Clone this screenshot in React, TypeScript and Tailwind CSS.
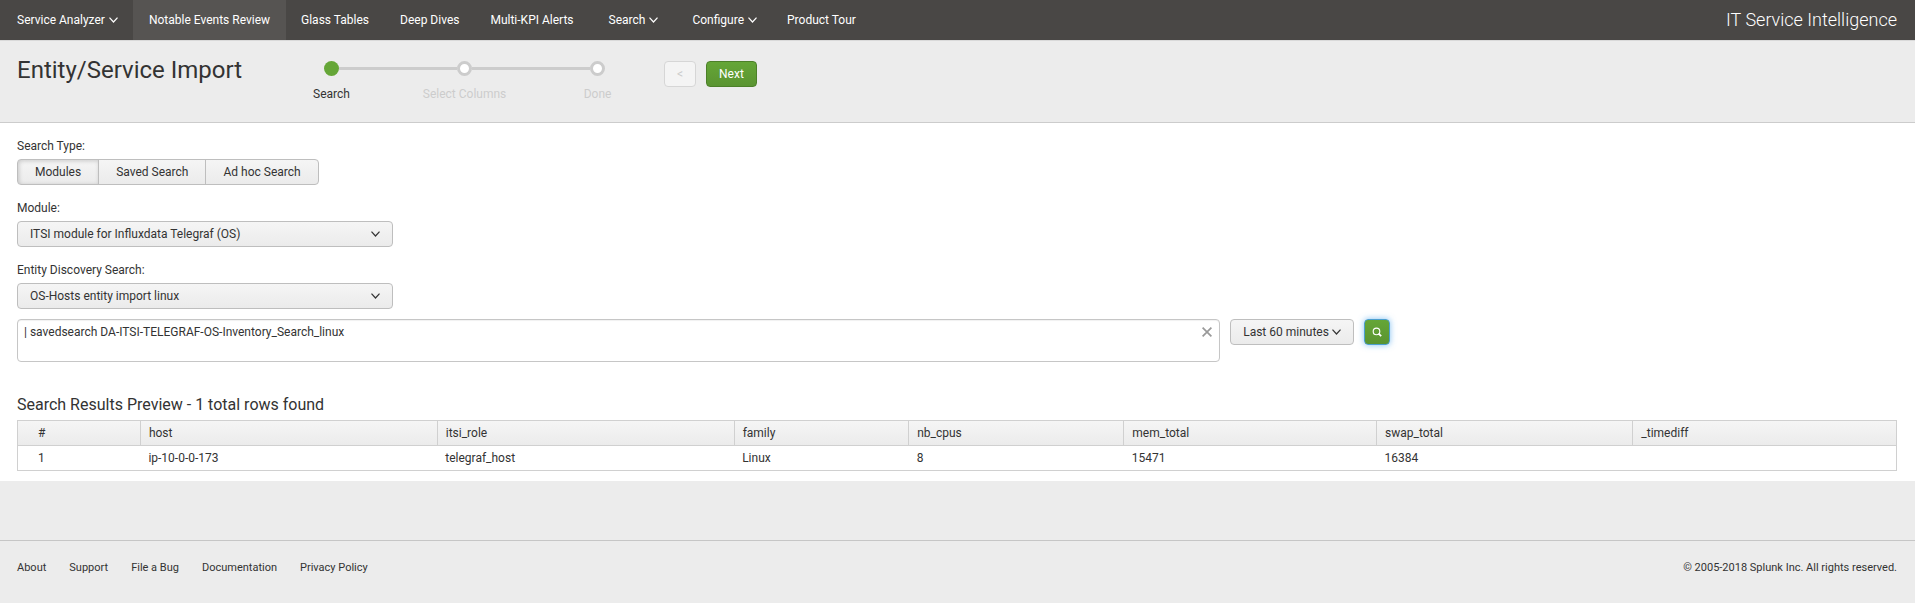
import { useState } from "react";
import type { ReactNode } from "react";

type NavItem = { label: string; menu?: boolean; active?: boolean };

const navItems: NavItem[] = [
  { label: "Service Analyzer", menu: true },
  { label: "Notable Events Review", active: true },
  { label: "Glass Tables" },
  { label: "Deep Dives" },
  { label: "Multi-KPI Alerts" },
  { label: "Search", menu: true },
  { label: "Configure", menu: true },
  { label: "Product Tour" },
];

const steps = ["Search", "Select Columns", "Done"];
const searchTypes = ["Modules", "Saved Search", "Ad hoc Search"];
const footerLinks = ["About", "Support", "File a Bug", "Documentation", "Privacy Policy"];

const columns = [
  { name: "#", value: "1", width: "w-[6.54%]" },
  { name: "host", value: "ip-10-0-0-173", width: "w-[15.8%]" },
  { name: "itsi_role", value: "telegraf_host", width: "w-[15.8%]" },
  { name: "family", value: "Linux", width: "w-[9.29%]" },
  { name: "nb_cpus", value: "8", width: "w-[11.45%]" },
  { name: "mem_total", value: "15471", width: "w-[13.45%]" },
  { name: "swap_total", value: "16384", width: "w-[13.64%]" },
  { name: "_timediff", value: "", width: "w-[14.03%]" },
];

function Chevron() {
  return (
    <svg viewBox="0 0 9 6" className="h-[6px] w-[9px] shrink-0" fill="none" stroke="currentColor" strokeWidth="1.2" aria-hidden="true">
      <path d="M0.5 0.6 4.5 5 8.5 0.6" />
    </svg>
  );
}

function SelectField({ id, label, children }: { id: string; label: string; children: ReactNode }) {
  return (
    <div className="flex flex-col gap-[3px]">
      <label htmlFor={id} className="leading-5">{label}</label>
      <div className="relative w-[376px] max-w-full">
        <select
          id={id}
          className="h-[26px] w-full appearance-none rounded-[4px] border border-[#bebebe] bg-linear-to-b from-[#f5f5f5] to-[#ebebeb] pr-8 pl-3 text-[#333]"
        >
          {children}
        </select>
        <span className="pointer-events-none absolute inset-y-0 right-[13px] flex items-center">
          <Chevron />
        </span>
      </div>
    </div>
  );
}

export default function App() {
  const [searchType, setSearchType] = useState("Modules");
  const [query, setQuery] = useState("| savedsearch DA-ITSI-TELEGRAF-OS-Inventory_Search_linux");

  return (
    <div className="min-h-screen bg-[#ececec] font-[Roboto,'Liberation_Sans',sans-serif] text-xs text-[#333]">
      <nav className="flex h-10 items-stretch justify-between bg-[#494745] pr-[18px] text-white">
        <ul className="flex">
          {navItems.map((item, i) => (
            <li key={item.label} className="flex">
              <a
                href="#"
                className={`flex items-center gap-1 whitespace-nowrap ${item.menu ? "pr-[15px]" : "pr-4"} ${i === 0 ? "pl-[17px]" : item.menu ? "pl-[19px]" : item.active ? "pl-4" : "pl-[15px]"} ${item.active ? "bg-[#565452]" : ""}`}
              >
                {item.label}
                {item.menu && <Chevron />}
              </a>
            </li>
          ))}
        </ul>
        <span className="self-center text-lg font-light whitespace-nowrap">IT Service Intelligence</span>
      </nav>

      <header className="flex h-[83px] items-start border-t border-b border-t-[#d9d9d9] border-b-[#ccc] pl-[17px]">
        <h1 className="mt-[13px] text-2xl leading-8 whitespace-nowrap">Entity/Service Import</h1>
        <ol className="mt-5 ml-[23px] flex">
          {steps.map((step, i) => (
            <li key={step} className={`flex w-[133px] flex-col items-center gap-2 ${i === 0 ? "" : "text-[#ccc]"}`}>
              <span className="flex w-full items-center">
                <span className={`h-[3px] flex-1 ${i === 0 ? "" : "bg-[#ccc]"}`} />
                <span className={`size-[15px] rounded-full ${i === 0 ? "bg-[#65a637]" : "border-3 border-[#ccc] bg-white"}`} />
                <span className={`h-[3px] flex-1 ${i === steps.length - 1 ? "" : "bg-[#ccc]"}`} />
              </span>
              <span className="leading-5">{step}</span>
            </li>
          ))}
        </ol>
        <div className="mt-5 flex gap-[10px]">
          <button disabled className="h-[26px] w-8 rounded-[4px] border border-[#d6d6d6] bg-[#f4f4f4] text-[#ccc]">&lt;</button>
          <button className="h-[26px] rounded-[4px] border border-[#4c8029] bg-linear-to-b from-[#65a637] to-[#5a9431] px-3 text-white">Next</button>
        </div>
      </header>

      <main className="bg-white pt-[13px] pr-[18px] pb-[10px] pl-[17px]">
        <div className="flex flex-col gap-[13px]">
          <fieldset>
            <legend className="mb-[3px] leading-5">Search Type:</legend>
            <div className="flex">
              {searchTypes.map((type) => (
                <button
                  key={type}
                  aria-pressed={type === searchType}
                  onClick={() => setSearchType(type)}
                  className={`-ml-px h-[26px] border border-[#bebebe] bg-linear-to-b from-[#f5f5f5] to-[#ebebeb] px-[17px] first:ml-0 first:rounded-l-[4px] last:rounded-r-[4px] ${type === searchType ? "shadow-[inset_1px_1px_4px_rgba(0,0,0,0.18)]" : ""}`}
                >
                  {type}
                </button>
              ))}
            </div>
          </fieldset>
          <SelectField id="module" label="Module:">
            <option>ITSI module for Influxdata Telegraf (OS)</option>
          </SelectField>
          <SelectField id="discovery" label="Entity Discovery Search:">
            <option>OS-Hosts entity import linux</option>
          </SelectField>
        </div>

        <div className="mt-[10px] flex items-start gap-[10px]">
          <div className="relative flex w-[64%]">
            <textarea
              aria-label="Search string"
              value={query}
              onChange={(e) => setQuery(e.target.value)}
              className="h-[43px] w-full resize-none rounded-[4px] border border-[#c6c6c6] bg-white py-[2px] pr-8 pl-[6px] leading-5 shadow-[inset_0_1px_1px_rgba(0,0,0,0.06)]"
            />
            <button aria-label="Clear search" onClick={() => setQuery("")} className="absolute top-2 right-2 text-[#999]">
              <svg viewBox="0 0 10 10" className="size-[10px]" fill="none" stroke="currentColor" strokeWidth="1.7" aria-hidden="true">
                <path d="M0.6 0.6 9.4 9.4M9.4 0.6 0.6 9.4" />
              </svg>
            </button>
          </div>
          <button className="flex h-[26px] items-center gap-[3px] rounded-[4px] border border-[#bebebe] bg-linear-to-b from-[#f5f5f5] to-[#ebebeb] px-3 whitespace-nowrap">
            Last 60 minutes
            <Chevron />
          </button>
          <button
            aria-label="Run search"
            className="flex size-[26px] items-center justify-center rounded-[4px] border border-[#4c9fd0] bg-linear-to-b from-[#65a637] to-[#5a9431] text-white shadow-[0_0_6px_rgba(82,168,236,0.7)]"
          >
            <svg viewBox="0 0 10 10" className="size-[10px]" fill="none" stroke="currentColor" aria-hidden="true">
              <circle cx="4.5" cy="4.4" r="3.3" strokeWidth="1.1" />
              <path d="M6.6 6.6 9.2 9.2" strokeWidth="1.7" />
            </svg>
          </button>
        </div>

        <h2 className="mt-[33px] text-base leading-5">Search Results Preview - 1 total rows found</h2>
        <table className="mt-[5px] w-full table-fixed border-collapse border border-[#d0d0d0] text-left">
          <thead>
            <tr className="h-[25px] bg-linear-to-b from-[#f5f5f5] to-[#ebebeb]">
              {columns.map((col, i) => (
                <th key={col.name} className={`border border-[#d0d0d0] pr-2 font-normal ${i === 0 ? "pl-5" : "pl-2"} ${col.width}`}>
                  {col.name}
                </th>
              ))}
            </tr>
          </thead>
          <tbody>
            <tr className="h-[25px]">
              {columns.map((col, i) => (
                <td key={col.name} className={`pr-2 ${i === 0 ? "pl-5" : "pl-2"}`}>
                  {col.value}
                </td>
              ))}
            </tr>
          </tbody>
        </table>
      </main>

      <footer className="mt-[59px] flex items-center justify-between border-t border-[#c6c6c6] pt-[17px] pr-[18px] pb-[23px] pl-[17px] text-[11px] leading-5">
        <ul className="flex gap-[23px]">
          {footerLinks.map((link) => (
            <li key={link}>
              <a href="#">{link}</a>
            </li>
          ))}
        </ul>
        <span>© 2005-2018 Splunk Inc. All rights reserved.</span>
      </footer>
    </div>
  );
}
